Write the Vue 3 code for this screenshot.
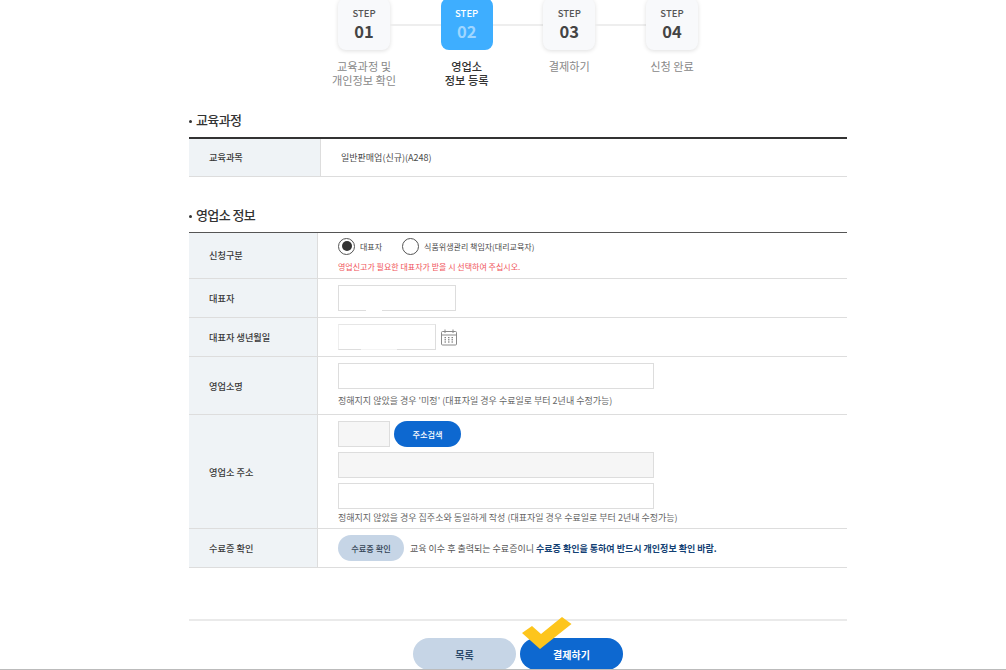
<script setup>
const steps = [
  { n: '01', lines: ['교육과정 및', '개인정보 확인'] },
  { n: '02', lines: ['영업소', '정보 등록'], on: true },
  { n: '03', lines: ['결제하기'] },
  { n: '04', lines: ['신청 완료'] }
]
</script>

<template>
  <div class="page">
    <div class="steps">
      <template v-for="(s, i) in steps" :key="s.n">
        <div class="box" :class="{ on: s.on }">
          <span class="st">STEP</span>
          <b class="num">{{ s.n }}</b>
        </div>
        <i v-if="i < 3" class="conn"></i>
      </template>
    </div>
    <div class="labels">
      <div v-for="s in steps" :key="s.n" class="lab" :class="{ on: s.on }">
        <div v-for="l in s.lines" :key="l">{{ l }}</div>
      </div>
    </div>

    <h3 class="title first">교육과정</h3>
    <div class="tbl top">
      <div class="row r1 wide">
        <div class="th up">교육과목</div>
        <div class="td course">일반판매업(신규)(A248)</div>
      </div>
    </div>

    <h3 class="title second">영업소 정보</h3>
    <div class="tbl">
      <div class="row r-type">
        <div class="th up">신청구분</div>
        <div class="td col">
          <div class="radios">
            <span class="radio checked"></span><span class="rl">대표자</span>
            <span class="radio second-radio"></span><span class="rl">식품위생관리 책임자(대리교육자)</span>
          </div>
          <p class="warn">영업신고가 필요한 대표자가 받을 시 선택하여 주십시오.</p>
        </div>
      </div>
      <div class="row r-38">
        <div class="th">대표자</div>
        <div class="td"><div class="inp w118 gap-a"></div></div>
      </div>
      <div class="row r-38">
        <div class="th">대표자 생년월일</div>
        <div class="td">
          <div class="inp w98 gap-b"></div>
          <svg class="cal" width="17" height="17" viewBox="0 0 17 17" fill="none" stroke="#8a8a8a" stroke-width="1">
            <rect x="0.5" y="2.5" width="15" height="13.5" rx="1"/>
            <path d="M0.5 6h15M4 0.5v3.5M12 0.5v3.5"/>
            <path d="M3.5 8.7h2M7 8.7h2M10.5 8.7h2M3.5 10.8h2M7 10.8h2M10.5 10.8h2M3.5 13h2M7 13h2M10.5 13h2" stroke="#666" stroke-dasharray="1.5 0.5"/>
          </svg>
        </div>
      </div>
      <div class="row r-name">
        <div class="th">영업소명</div>
        <div class="td col">
          <div class="inp w316"></div>
          <p class="help h1">정해지지 않았을 경우 '미정' (대표자일 경우 수료일로 부터 2년내 수정가능)</p>
        </div>
      </div>
      <div class="row r-addr">
        <div class="th">영업소 주소</div>
        <div class="td col">
          <div class="zip">
            <div class="inp w52 gray"></div>
            <button class="btn-search">주소검색</button>
          </div>
          <div class="inp w316 gray a1"></div>
          <div class="inp w316 a2"></div>
          <p class="help h2">정해지지 않았을 경우 집주소와 동일하게 작성 (대표자일 경우 수료일로 부터 2년내 수정가능)</p>
        </div>
      </div>
      <div class="row r-38">
        <div class="th">수료증 확인</div>
        <div class="td">
          <button class="btn-cert">수료증 확인</button>
          <span class="cert-text">교육 이수 후 출력되는 수료증이니 <b>수료증 확인을 통하여 반드시 개인정보 확인 바람.</b></span>
        </div>
      </div>
    </div>

    <div class="actions">
      <button class="btn list">목록</button>
      <button class="btn pay">
        결제하기
        <svg class="check" width="50" height="33" viewBox="0 0 50 33"><path d="M0 16 L10 9 L19 17 L40 0 L49.5 7 L18 32 Z" fill="#fdc51c"/></svg>
      </button>
    </div>
  </div>
  <div class="bottom-line"></div>
</template>

<style>
html, body { margin: 0; background: #fff; overflow: hidden; }
</style>

<style scoped>
.page {
  width: 658px;
  height: 670px;
  margin-left: 189px;
  font-family: "Noto Sans CJK KR", "Noto Sans", sans-serif;
  color: #333;
  overflow: hidden;
}
.steps { display: flex; justify-content: center; align-items: center; margin-top: -2px; }
.box {
  width: 52px; height: 52px; box-sizing: border-box;
  background: #f8f9fb; border-radius: 8px;
  box-shadow: 0 1px 4px rgba(0,0,0,.13);
  display: flex; flex-direction: column; align-items: center;
  padding-top: 8px; color: #555;
}
.box.on { background: #3eaeff; color: #fff; box-shadow: none; }
.st { font-size: 9.5px; line-height: 14px; font-weight: 500; }
.num { font-size: 16.5px; line-height: 22px; margin-top: 0; font-weight: 700; color: #444; }
.on .num { color: #9fd6ff; }
.conn { width: 50.67px; height: 2px; margin-top: 1px; background: #eee; }
.labels { display: flex; justify-content: center; margin-top: 9px; }
.lab { width: 102.67px; text-align: center; font-size: 11.2px; line-height: 14px; color: #888; white-space: nowrap; }
.lab.on { color: #333; font-weight: 500; }
.title { margin: 0; font-size: 13px; line-height: 16px; letter-spacing: -0.6px; font-weight: 500; color: #333; padding-left: 7px; position: relative; }
.title::before { content: ""; position: absolute; left: 0; top: 8px; width: 3px; height: 3px; border-radius: 50%; background: #333; }
.title.first { margin-top: 25px; }
.title.second { margin-top: 30px; }
.tbl { margin-top: 9px; border-top: 1px solid #555; }
.tbl.top { margin-top: 9px; border-top: 2px solid #333; }
.row { display: flex; border-bottom: 1px solid #ddd; box-sizing: content-box; }
.th {
  width: 129px; flex: none; box-sizing: border-box; background: #eff3f6;
  border-right: 1px solid #ddd; display: flex; align-items: center;
  padding-left: 20px; font-size: 9.2px; font-weight: 500; color: #3a3a3a;
}
.th.up { padding-bottom: 2px; }
.wide .th { width: 132px; }
.td { flex: 1; display: flex; align-items: center; padding-left: 20px; min-width: 0; }
.col { flex-direction: column; align-items: flex-start; }
.r1 { height: 37px; }
.course { font-size: 9px; color: #4a4a4a; }
.r-type { height: 45px; }
.r-type .td { padding-top: 5px; box-sizing: border-box; }
.r-38 { height: 38px; }
.r-name { height: 57px; }
.r-name .td { padding-top: 6px; box-sizing: border-box; }
.r-addr { height: 113px; }
.r-addr .td { padding-top: 6px; box-sizing: border-box; }
.radios { display: flex; align-items: center; height: 16px; }
.radio { width: 17px; height: 17px; box-sizing: border-box; border: 1.5px solid #555; border-radius: 50%; background: #fff; position: relative; flex: none; }
.radio.checked::after { content: ""; position: absolute; inset: 2.5px; border-radius: 50%; background: #333; }
.second-radio { margin-left: 20px; }
.rl { font-size: 8px; color: #4a4a4a; margin-left: 5px; }
.warn { margin: 7px 0 0; font-size: 8px; line-height: 12px; color: #f0545a; }
.inp { height: 26px; box-sizing: border-box; border: 1px solid #ddd; background: #fff; flex: none; position: relative; }
.w118 { width: 118px; }
.w98 { width: 98px; }
.w316 { width: 316px; }
.w52 { width: 52px; }
.gray { background: #f6f6f6; }
.gap-a::after { content: ""; position: absolute; left: 27px; bottom: -1px; width: 16px; height: 1px; background: #fff; }
.gap-b { border-left-color: #eee; border-top-color: #e6e6e6; }
.gap-b::after { content: ""; position: absolute; left: 22px; bottom: -1px; width: 36px; height: 1px; background: #f4f4f4; }
.cal { margin-left: 5px; }
.help { margin: 0; font-size: 9px; line-height: 12px; color: #666; }
.h1 { margin-top: 6px; }
.h2 { margin-top: 3px; }
.zip { display: flex; align-items: center; gap: 4px; }
.a1 { margin-top: 5px; }
.a2 { margin-top: 5px; }
button { font-family: inherit; border: 0; cursor: pointer; padding: 0; }
.btn-search { width: 67px; height: 26px; border-radius: 13px; background: #0d68d0; color: #fff; font-size: 8.2px; font-weight: 500; }
.btn-cert { width: 66px; height: 26px; border-radius: 13px; background: #c6d5e6; color: #345; font-size: 8.2px; font-weight: 500; flex: none; }
.cert-text { margin-left: 6px; font-size: 9px; color: #555; white-space: nowrap; }
.cert-text b { color: #123f73; font-weight: 700; }
.actions { margin-top: 51px; border-top: 2px solid #eaeaea; padding-top: 17px; display: flex; justify-content: center; gap: 4px; }
.btn { width: 103px; height: 32px; border-radius: 16px; font-size: 10px; font-weight: 700; position: relative; }
.list { background: #c6d5e6; color: #2c4a6b; }
.pay { background: #0d68d0; color: #fff; }
.check { position: absolute; left: 2px; top: -21px; }
.bottom-line { position: fixed; left: 0; right: 0; bottom: 0; height: 1px; background: #bbb; }
</style>
